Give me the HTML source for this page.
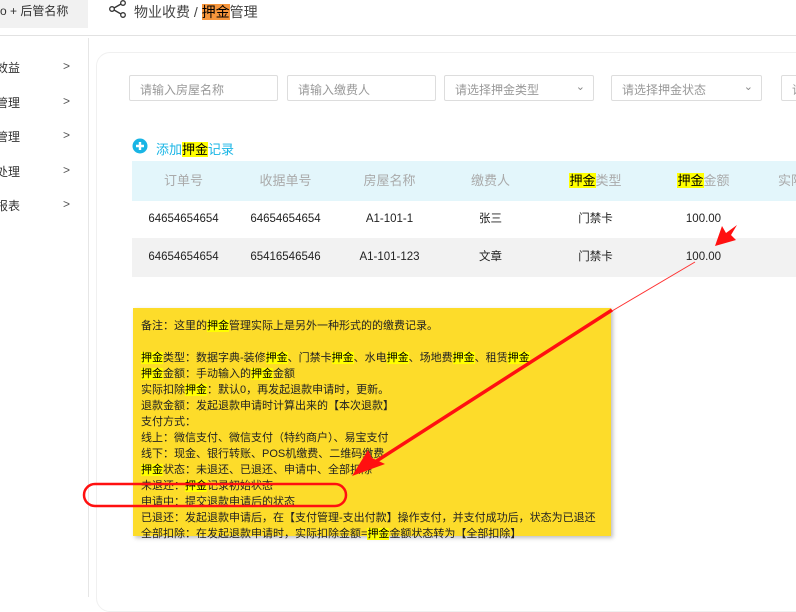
<!DOCTYPE html>
<html><head><meta charset="utf-8"><style>
*{margin:0;padding:0;box-sizing:border-box}
body{width:796px;height:597px;overflow:hidden;background:#fff;font-family:"Liberation Sans","Noto Sans CJK SC",sans-serif;position:relative;color:#333}
.a{position:absolute}
.hl{background:#ffff00;color:#000}
.inp{position:absolute;top:75px;height:26px;border:1px solid #ddd;border-radius:2px;font-size:12px;color:#999;padding:5px 10px;background:#fff}
.chev{position:absolute;right:8px;top:4px;font-size:11px;color:#888}
.th{position:absolute;top:161px;height:40px;line-height:40px;font-size:13px;color:#aaa;text-align:center;width:105px}
.td{position:absolute;height:37px;line-height:37px;font-size:11.5px;color:#222;text-align:center;width:105px}
.side{position:absolute;left:-4px;font-size:12px;color:#333;width:84px}
.side span{position:absolute;right:10px;color:#555}
.note{position:absolute;left:133px;top:308px;width:478px;height:228px;background:#fddc2a;box-shadow:2px 2px 4px rgba(0,0,0,.25);font-size:11px;color:#222;padding:10px 0 0 8px;line-height:16px;white-space:nowrap;overflow:visible}
.note .hl{background:#ffff00}
</style></head><body>
<div class="a" style="left:0;top:0;width:88px;height:28px;background:#f1f1f1;font-size:12px;line-height:22px;color:#333">o + 后管名称</div>
<div class="a" style="left:0;top:35px;width:796px;height:1px;background:#e2e2e2"></div>
<svg class="a" style="left:108px;top:0" width="20" height="18" viewBox="0 0 20 18"><circle cx="4" cy="9" r="2.3" fill="none" stroke="#333" stroke-width="1.3"/><circle cx="15" cy="3" r="2.3" fill="none" stroke="#333" stroke-width="1.3"/><circle cx="15" cy="15" r="2.3" fill="none" stroke="#333" stroke-width="1.3"/><path d="M6 8 L13 4 M6 10 L13 14" stroke="#333" stroke-width="1.3"/></svg>
<div class="a" style="left:134px;top:2px;font-size:14px;color:#444">物业收费 / <span style="background:#f7963c;color:#000">押金</span>管理</div>
<div class="a" style="left:88px;top:38px;width:1px;height:559px;background:#e6e6e6"></div>
<div class="side" style="top:59px">效益<span>&gt;</span></div>
<div class="side" style="top:94px">管理<span>&gt;</span></div>
<div class="side" style="top:128px">管理<span>&gt;</span></div>
<div class="side" style="top:163px">处理<span>&gt;</span></div>
<div class="side" style="top:197px">报表<span>&gt;</span></div>
<div class="a" style="left:96px;top:52px;width:720px;height:560px;border:1px solid #f0f0f0;border-radius:14px"></div>
<div class="inp" style="left:129px;width:149px">请输入房屋名称</div>
<div class="inp" style="left:287px;width:149px">请输入缴费人</div>
<div class="inp" style="left:444px;width:150px">请选择押金类型<span class="chev">&#8964;</span></div>
<div class="inp" style="left:611px;width:151px">请选择押金状态<span class="chev">&#8964;</span></div>
<div class="inp" style="left:781px;width:40px">请</div>
<svg class="a" style="left:132px;top:138px" width="16" height="16"><circle cx="8" cy="8" r="7.5" fill="#19b5e5"/><path d="M4 8h8M8 4v8" stroke="#fff" stroke-width="2.4"/></svg>
<div class="a" style="left:156px;top:139px;font-size:13px;color:#19b5e5">添加<span class="hl">押金</span>记录</div>
<div class="a" style="left:132px;top:161px;width:664px;height:40px;background:#e3f6fb"></div>
<div class="th" style="left:131px">订单号</div>
<div class="th" style="left:233px">收据单号</div>
<div class="th" style="left:337px">房屋名称</div>
<div class="th" style="left:438px">缴费人</div>
<div class="th" style="left:543px"><span class="hl">押金</span>类型</div>
<div class="th" style="left:651px"><span class="hl">押金</span>金额</div>
<div class="th" style="left:760px;text-align:left;padding-left:18px">实际</div>
<div class="a" style="left:132px;top:238px;width:664px;height:39px;background:#f2f2f2"></div>
<div class="td" style="left:131px;top:201px">64654654654</div>
<div class="td" style="left:233px;top:201px">64654654654</div>
<div class="td" style="left:337px;top:201px">A1-101-1</div>
<div class="td" style="left:438px;top:201px">张三</div>
<div class="td" style="left:543px;top:201px">门禁卡</div>
<div class="td" style="left:651px;top:201px">100.00</div>
<div class="td" style="left:131px;top:239px">64654654654</div>
<div class="td" style="left:233px;top:239px">65416546546</div>
<div class="td" style="left:337px;top:239px">A1-101-123</div>
<div class="td" style="left:438px;top:239px">文章</div>
<div class="td" style="left:543px;top:239px">门禁卡</div>
<div class="td" style="left:651px;top:239px">100.00</div>
<div class="note">备注：这里的<span class="hl">押金</span>管理实际上是另外一种形式的的缴费记录。<br><br>
<span class="hl">押金</span>类型：数据字典-装修<span class="hl">押金</span>、门禁卡<span class="hl">押金</span>、水电<span class="hl">押金</span>、场地费<span class="hl">押金</span>、租赁<span class="hl">押金</span><br>
<span class="hl">押金</span>金额：手动输入的<span class="hl">押金</span>金额<br>
实际扣除<span class="hl">押金</span>：默认0，再发起退款申请时，更新。<br>
退款金额：发起退款申请时计算出来的【本次退款】<br>
支付方式：<br>
线上：微信支付、微信支付（特约商户）、易宝支付<br>
线下：现金、银行转账、POS机缴费、二维码缴费<br>
<span class="hl">押金</span>状态：未退还、已退还、申请中、全部扣除<br>
未退还：<span class="hl">押金</span>记录初始状态<br>
申请中：提交退款申请后的状态<br>
已退还：发起退款申请后，在【支付管理-支出付款】操作支付，并支付成功后，状态为已退还<br>
全部扣除：在发起退款申请时，实际扣除金额=<span class="hl">押金</span>金额状态转为【全部扣除】</div>
<svg class="a" style="left:0;top:0" width="796" height="597">
<path d="M695 262 L612 311" stroke="#ff3030" stroke-width="1"/>
<path d="M612 310 L375 462" stroke="#ff1010" stroke-width="3.5"/>
<path d="M352 476 L368 450 L372 458 L385 464 Z" fill="#ff1010"/>
<path d="M715 246 L722 226 L726 233 L737 225 L731 235 L736 240 Z" fill="#ff1010"/>
<rect x="84" y="484" width="262" height="22" rx="11" fill="none" stroke="#ff1010" stroke-width="2.5"/>
</svg>
</body></html>
